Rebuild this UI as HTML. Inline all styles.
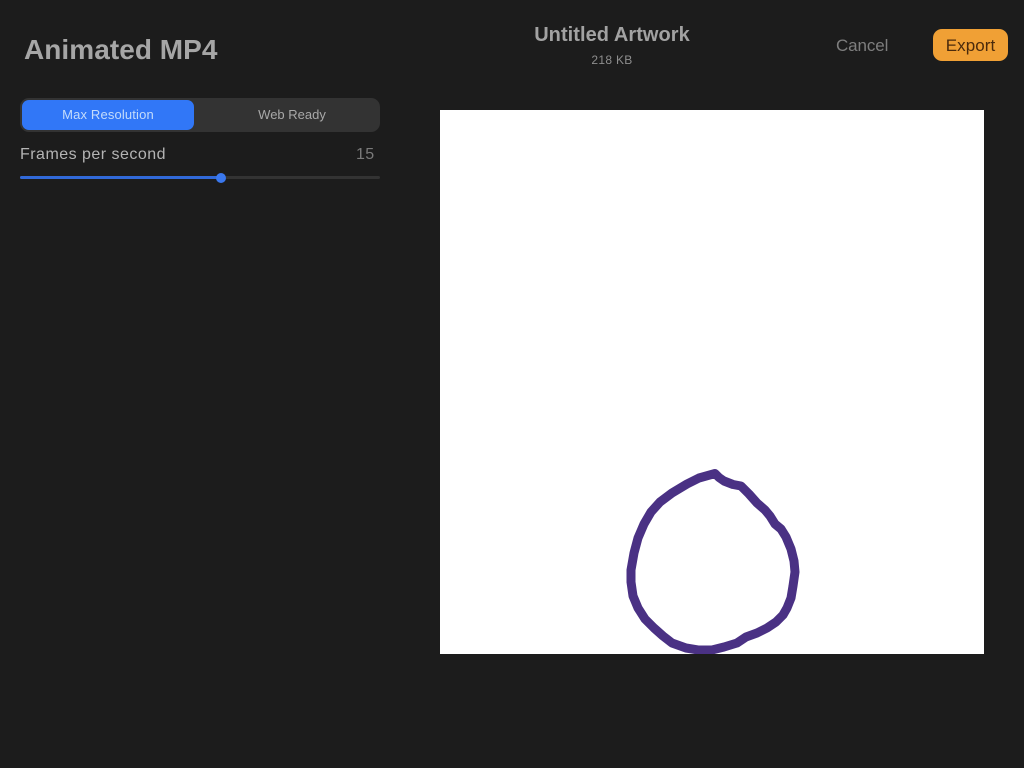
<!DOCTYPE html>
<html>
<head>
<meta charset="utf-8">
<style>
html,body{margin:0;padding:0;width:1024px;height:768px;overflow:hidden;background:#1c1c1c;font-family:"Liberation Sans",sans-serif;}
.t{position:absolute;white-space:nowrap;line-height:1;}
.b{position:absolute;}
</style>
</head>
<body>
<div class="t" style="left:24px;top:36px;font-size:28px;font-weight:bold;letter-spacing:.05px;color:#a6a6a6;">Animated MP4</div>

<div class="b" style="left:20px;top:98px;width:360px;height:34px;background:#333333;border-radius:9px;"></div>
<div class="b" style="left:22px;top:100px;width:172px;height:30px;background:#3177f7;border-radius:7px;"></div>
<div class="t" style="left:22px;top:108px;width:172px;text-align:center;font-size:13px;letter-spacing:.15px;color:#c4dcfb;">Max Resolution</div>
<div class="t" style="left:204px;top:108px;width:176px;text-align:center;font-size:13px;letter-spacing:0;color:#a8a8a8;">Web Ready</div>

<div class="t" style="left:20px;top:147px;font-size:16px;letter-spacing:.48px;color:#b4b4b4;">Frames per second</div>
<div class="t" style="left:356px;top:147px;font-size:16px;letter-spacing:.3px;color:#7a7a7a;">15</div>

<div class="b" style="left:20px;top:176px;width:360px;height:3px;background:#333333;border-radius:2px;"></div>
<div class="b" style="left:20px;top:176px;width:201px;height:3px;background:#3169d8;border-radius:2px;"></div>
<div class="b" style="left:216px;top:173px;width:10px;height:10px;background:#3a78ee;border-radius:50%;"></div>

<div class="t" style="left:512px;top:25px;width:200px;text-align:center;font-size:20px;font-weight:bold;letter-spacing:.05px;color:#a2a2a2;">Untitled Artwork</div>
<div class="t" style="left:512px;top:54px;width:200px;text-align:center;font-size:12px;letter-spacing:.3px;color:#8e8e8e;">218 KB</div>

<div class="t" style="left:836px;top:37px;font-size:17px;letter-spacing:-.1px;color:#7e7e7e;">Cancel</div>
<div class="b" style="left:933px;top:29px;width:75px;height:32px;background:#f0a035;border-radius:9px;"></div>
<div class="t" style="left:933px;top:37px;width:75px;text-align:center;font-size:17px;letter-spacing:.05px;color:#4a2a0c;">Export</div>

<svg class="b" style="left:440px;top:110px;" width="544" height="544" viewBox="440 110 544 544">
<rect x="440" y="110" width="544" height="544" fill="#ffffff"/>
<polygon points="715,473.500 719,477.500 724,481 733,484.500 741,486 749,494 757,503 765,510 770,516 775,524 781,529 786,537 791,549 794,561 795,572 793,586 791,598 787,608 783,615 776,622 767,628 757,633 746,637 737,643 724,647 712,650 698,650 686,648 672,643 663,636 654,628 645,619 638,608 633,596 631,582 631,570 634,553 638,538 644,524 651,512 660,502 672,493 687,484 699,478" fill="none" stroke="#4a3184" stroke-width="9" stroke-linejoin="round"/>
</svg>
</body>
</html>
